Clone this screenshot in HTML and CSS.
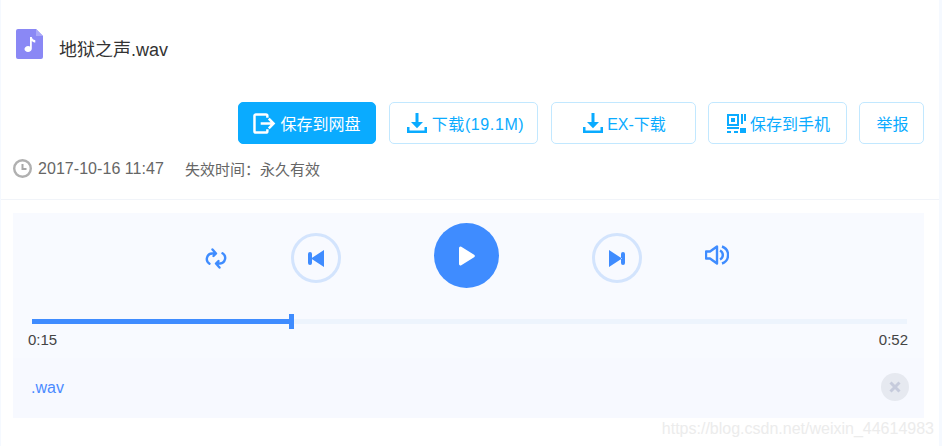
FILE: index.html
```html
<!DOCTYPE html>
<html lang="zh-CN">
<head>
<meta charset="utf-8">
<title>地狱之声.wav</title>
<link rel="stylesheet" href="styles.css">
</head>
<body>
<div class="page">
  <header class="file-head">
    <svg class="file-icon" viewBox="0 0 27 30"><path fill="#8a88f5" d="M2 0h18l7 7v21a2 2 0 0 1-2 2H2a2 2 0 0 1-2-2V2a2 2 0 0 1 2-2z"/><path fill="#a9a8f8" d="M20 0l7 7h-7z"/><path fill="#fff" d="M14 8l1.800 0c.3 2 1.600 2.800 3.500 3.300v2.300c-1.500-.2-2.700-.8-3.500-1.600v7.500c0 2.200-1.800 3.500-3.800 3.500s-3.500-1.200-3.500-2.900 1.600-3.100 3.600-3.100c.8 0 1.500.2 1.900.5z"/></svg>
    <h1 class="file-name">地狱之声.wav</h1>
  </header>
  <div class="actions">
    <a class="btn btn-primary btn-save">
      <svg class="ico" viewBox="0 0 24 22"><path fill="none" stroke="#fff" stroke-width="2.600" d="M15 5V3a1.500 1.500 0 0 0-1.500-1.500H3A1.500 1.500 0 0 0 1.500 3v16A1.500 1.500 0 0 0 3 20.500h10.500A1.500 1.500 0 0 0 15 19v-2"/><path fill="none" stroke="#fff" stroke-width="2.600" d="M8 11h13M16.500 6l5 5-5 5"/></svg>
      <span>保存到网盘</span>
    </a>
    <a class="btn btn-down">
      <svg class="ico" viewBox="0 0 20 20"><path fill="#0aabff" d="M8.500 0h3v9h4.500l-6 6.200-6-6.200h4.500zM0 14h2.500v3.500h15V14H20v6H0z"/></svg>
      <span class="spaced">下载(19.1M)</span>
    </a>
    <a class="btn btn-ex">
      <svg class="ico" viewBox="0 0 20 20"><path fill="#0aabff" d="M8.500 0h3v9h4.500l-6 6.200-6-6.200h4.500zM0 14h2.500v3.500h15V14H20v6H0z"/></svg>
      <span>EX-下载</span>
    </a>
    <a class="btn btn-phone">
      <svg class="ico" viewBox="0 0 19 19"><path fill="#0aabff" fill-rule="evenodd" d="M0 0h12v12H0zM2 2v8h8V2zM4 4h4v4H4zM14 0h2v10h-2zM17 0h2v7h-2zM0 13h12v2H0zM0 17h4v2H0zM7 17h4v2H7zM13 14h6v5h-6z"/></svg>
      <span>保存到手机</span>
    </a>
    <a class="btn btn-report"><span>举报</span></a>
  </div>
  <div class="meta">
    <svg class="clock" viewBox="0 0 19 19"><circle cx="9.500" cy="9.500" r="8.300" fill="none" stroke="#b0b0b0" stroke-width="2.400"/><path fill="none" stroke="#a8a8a8" stroke-width="2" d="M9.500 5v5h4"/></svg>
    <span class="date">2017-10-16 11:47</span>
    <span class="expire">失效时间：永久有效</span>
  </div>
  <div class="divider"></div>
  <section class="player">
    <div class="controls">
      <button class="ctl ctl-mode">
        <svg viewBox="0 0 24 24"><path fill="none" stroke="#3f8cff" stroke-width="2.400" stroke-linecap="round" stroke-linejoin="round" d="M11.500 7.500H8a5.500 5.500 0 0 0-2.500 10.200M12.500 17.500H16a5.500 5.500 0 0 0 2.500-10.200M8.500 3.500L12 7.500 9.500 10M15.500 21.500L12 17.500l2.500-2.500"/></svg>
      </button>
      <button class="ctl ctl-prev">
        <svg viewBox="0 0 16 17"><path fill="#3f8cff" d="M16 0v17L3 8.500zM0 4a2 2 0 0 1 4 0v9a2 2 0 0 1-4 0z"/></svg>
      </button>
      <button class="ctl ctl-play">
        <svg viewBox="0 0 16 20"><path fill="#fff" d="M0 2a1.500 1.500 0 0 1 2.300-1.300l12.800 8a1.500 1.500 0 0 1 0 2.600l-12.800 8A1.500 1.500 0 0 1 0 18z"/></svg>
      </button>
      <button class="ctl ctl-next">
        <svg viewBox="0 0 16 17"><path fill="#3f8cff" d="M0 0v17l13-8.500zM12 4a2 2 0 0 1 4 0v9a2 2 0 0 1-4 0z"/></svg>
      </button>
      <button class="ctl ctl-vol">
        <svg viewBox="0 0 24 20"><path fill="none" stroke="#3f8cff" stroke-width="2.400" stroke-linejoin="round" d="M1 6.500h4L12 1.500v17l-7-5H1z"/><path fill="none" stroke="#3f8cff" stroke-width="2.400" d="M15 5.500a5 5 0 0 1 0 9M17 1.500a9 9 0 0 1 0 17"/></svg>
      </button>
    </div>
    <div class="track">
      <div class="track-fill"><i class="track-handle"></i></div>
    </div>
    <div class="times"><span>0:15</span><span>0:52</span></div>
    <div class="playlist">
      <span class="track-name">.wav</span>
      <button class="close">
        <svg viewBox="0 0 12 12"><path fill="none" stroke="#c6cbdc" stroke-width="3" d="M1.500 1.500l9 9M10.500 1.500l-9 9"/></svg>
      </button>
    </div>
  </section>
  <div class="watermark">https://blog.csdn.net/weixin_44614983</div>
</div>
</body>
</html>
```
FILE: styles.css
```css
* { box-sizing: border-box; }
html, body { margin: 0; padding: 0; background: #f5f9ff; }
body {
  width: 942px;
  height: 446px;
  overflow: hidden;
  font-family: "Liberation Sans", "Noto Sans CJK SC", sans-serif;
  padding: 0 3px 0 1px;
}
.page { background: #fff; height: 446px; padding-top: 29px; }

.file-head { display: flex; align-items: flex-start; padding-left: 15px; height: 73px; }
.file-icon { width: 27px; height: 30px; flex: none; }
.file-name { margin: 9px 0 0 16px; font-size: 18px; font-weight: 400; line-height: 24px; color: #333; }

.actions { display: flex; justify-content: flex-end; gap: 12px; padding-right: 15px; }
.btn {
  display: flex; align-items: center; justify-content: center; gap: 4px;
  height: 42px; padding-left: 2px; border: 1px solid #c2e8ff; border-radius: 5px;
  color: #0aabff; font-size: 16px; background: #fff;
}
.btn .ico { width: 20px; height: 20px; flex: none; }
.btn-primary { background: #0aabff; border-color: #0aabff; color: #fff; padding-left: 0; }
.btn-primary .ico { width: 23px; height: 21px; }
.spaced { letter-spacing: .6px; }
.btn-save { width: 138px; margin-right: 1px; }
.btn-down { width: 149px; margin-right: 1px; gap: 5px; padding-left: 4px; }
.btn-ex { width: 145px; }
.btn-phone { width: 139px; }
.btn-phone .ico { width: 19px; height: 19px; }
.btn-report { width: 65px; }

.meta { display: flex; align-items: center; height: 19px; margin-top: 15px; padding-left: 12px; font-size: 15px; color: #666; }
.clock { width: 19px; height: 19px; flex: none; margin-right: 6px; }
.date { font-size: 16px; letter-spacing: .05px; }
.expire { margin-left: 21px; }

.divider { height: 1px; background: #f1f4f9; margin-top: 21px; }

.player { margin: 13px 15px 0 12px; height: 205px; background: #f8faff; padding-top: 10px; }
.controls { display: flex; justify-content: center; align-items: flex-start; gap: 63px; padding-right: 5px; height: 81px; }
.ctl { display: flex; align-items: center; justify-content: center; padding: 0; border: 0; background: none; flex: none; }
.ctl-mode { width: 24px; height: 24px; margin-top: 23px; }
.ctl-mode svg { width: 24px; height: 24px; }
.ctl-prev, .ctl-next { width: 50px; height: 50px; margin-top: 10px; border: 3px solid #d3e4fd; border-radius: 50%; }
.ctl-prev svg, .ctl-next svg { width: 16px; height: 17px; }
.ctl-play { width: 65px; height: 65px; border-radius: 50%; background: #3f8cff; margin: 0 30px; }
.ctl-play svg { width: 16px; height: 20px; margin-left: 1px; }
.ctl-vol { width: 24px; height: 24px; margin-top: 20px; }
.ctl-vol svg { width: 24px; height: 20px; }

.track { height: 5px; margin: 15px 17px 0 19px; background: #edf4fd; }
.track-fill { position: relative; width: 259px; height: 5px; background: #3f8cff; }
.track-handle { position: absolute; right: -3px; top: -5px; width: 5px; height: 15px; background: #3f8cff; }

.times { display: flex; justify-content: space-between; margin: 7px 16px 0 15px; font-size: 15px; line-height: 18px; color: #444; }

.playlist { display: flex; justify-content: space-between; align-items: center; height: 60px; margin-top: 9px; padding: 0 15px 0 18px; background: #f7f9ff; }
.track-name { font-size: 16px; color: #4b8bff; }
.close { width: 28px; height: 28px; margin-bottom: 2px; padding: 0; border: 0; border-radius: 50%; background: #e6e9f0; display: flex; align-items: center; justify-content: center; }
.close svg { width: 12px; height: 12px; }

.watermark { text-align: right; margin-top: 1px; padding-right: 5px; font-size: 16px; line-height: 20px; color: #ececec; }
```
